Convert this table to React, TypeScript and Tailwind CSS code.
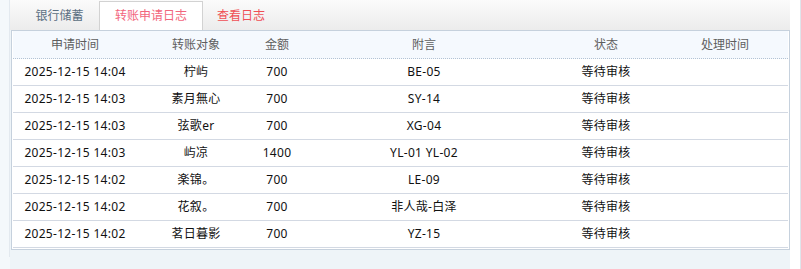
import React from "react";

const rows = [
  ["2025-12-15 14:04", "柠屿", "700", "BE-05", "等待审核", ""],
  ["2025-12-15 14:03", "素月無心", "700", "SY-14", "等待审核", ""],
  ["2025-12-15 14:03", "弦歌er", "700", "XG-04", "等待审核", ""],
  ["2025-12-15 14:03", "屿凉", "1400", "YL-01 YL-02", "等待审核", ""],
  ["2025-12-15 14:02", "楽锦。", "700", "LE-09", "等待审核", ""],
  ["2025-12-15 14:02", "花叙。", "700", "非人哉-白泽", "等待审核", ""],
  ["2025-12-15 14:02", "茗日暮影", "700", "YZ-15", "等待审核", ""],
];

const headers = ["申请时间", "转账对象", "金额", "附言", "状态", "处理时间"];

const grid = "grid grid-cols-[124px_118px_44px_250px_114px_124px]";

export default function App() {
  return (
    <div
      className="w-[801px] h-[269px] flex bg-white text-[12px]"
      style={{ fontFamily: '"Noto Sans", "Noto Sans CJK SC", sans-serif' }}
    >
      <div className="w-[10px] h-full bg-[#f4f8fb] flex">
        <div className="w-[9px]" />
        <div className="w-px h-[257px] bg-[#e3e9ef]" />
      </div>
      <div className="w-[780px] h-full flex flex-col bg-[#eef4f8]">
        <div className="h-[30px] flex bg-gradient-to-b from-[#fbfbfb] to-[#ececec]">
          <div className="ml-[10px] w-[79px] flex items-center justify-center text-[#5b6f82] pt-px">
            银行储蓄
          </div>
          <div className="mt-px w-[104px] h-[29px] bg-white border border-b-0 border-[#d2d2d2] flex items-center justify-center text-[#f2667c]">
            转账申请日志
          </div>
          <div className="w-[76px] flex items-center justify-center text-[#ef4f55] pt-px">
            查看日志
          </div>
        </div>
        <div className="ml-px w-[779px] border border-[#c6d1dd] bg-white pb-px">
          <div className={`${grid} mx-px h-[28px] bg-[#f5f9fe] border-b border-dotted border-[#b3c3d4] text-[#5e5e5e]`}>
            {headers.map((h) => (
              <div key={h} className="flex items-center justify-center h-[27px]">
                {h}
              </div>
            ))}
          </div>
          {rows.map((r, i) => (
            <div
              key={i}
              className={`${grid} mx-px h-[27px] border-b border-[#d3d9e3] text-[#111] tracking-[0.3px]`}
            >
              {r.map((c, j) => (
                <div key={j} className="flex items-center justify-center h-[26px]">
                  {c}
                </div>
              ))}
            </div>
          ))}
        </div>
      </div>
      <div className="w-[11px] h-full bg-white flex">
        <div className="w-[10px]" />
        <div className="w-px h-full bg-[#dfe5eb]" />
      </div>
    </div>
  );
}
